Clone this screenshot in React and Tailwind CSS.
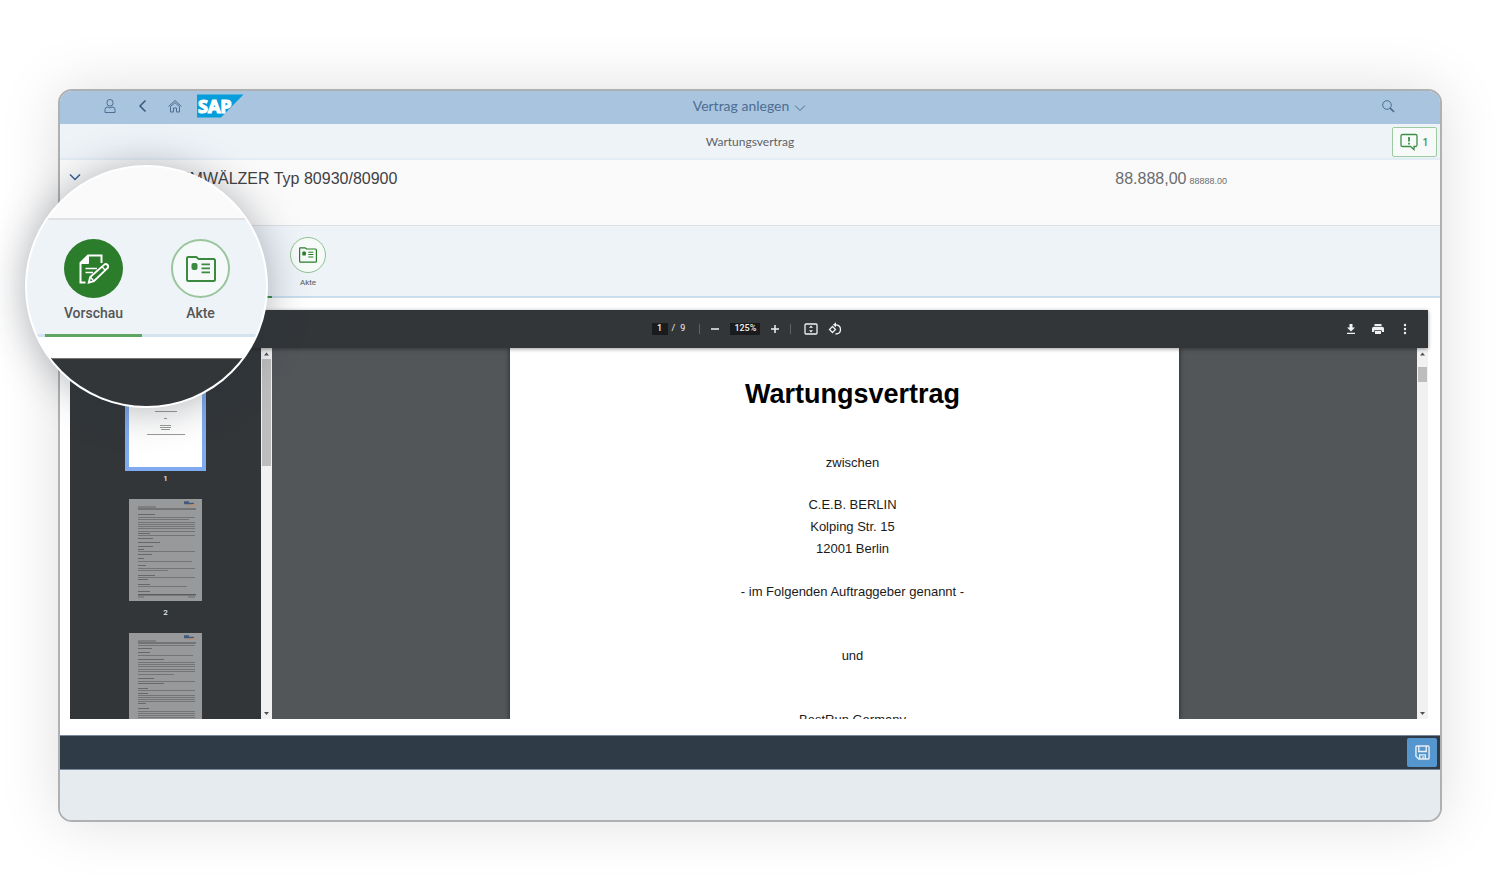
import { useState } from "react";

// geometry of the grey text blocks on the page thumbnails: [x, y, width]
const THUMB_LINES = {
  2: [
    [9, 15, 17], [9, 18, 57], [9, 20, 51], [9, 23, 57], [9, 25, 57], [9, 27, 57],
    [9, 29, 57], [9, 32, 57], [9, 34, 12], [9, 36, 57], [9, 39, 15], [9, 43, 22],
    [9, 47, 15], [9, 50, 6], [9, 52, 57], [9, 55, 14], [9, 59, 6], [9, 62, 54],
    [9, 66, 8], [9, 69, 57], [9, 71, 30], [9, 76, 17], [9, 78, 57], [9, 80, 10],
    [9, 85, 12], [9, 87, 49], [9, 92, 12],
  ],
  3: [
    [9, 12, 57], [9, 15, 14], [9, 19, 12], [9, 22, 55], [9, 26, 26], [9, 29, 57],
    [9, 31, 57], [9, 33, 57], [9, 36, 57], [9, 38, 57], [9, 41, 36], [9, 45, 16],
    [9, 48, 57], [9, 50, 26], [9, 55, 10], [9, 57, 57], [9, 60, 10], [9, 62, 57],
    [9, 64, 57], [9, 66, 57], [9, 68, 57], [9, 70, 8], [9, 75, 11], [9, 78, 57],
    [9, 80, 57], [9, 82, 57], [9, 84, 57], [9, 90, 40],
  ],
};

const TITLE_LINES = [
  [33, 28, 8], [31, 34, 12], [32, 37, 10], [32, 40, 9], [26, 46, 22],
  [35, 53, 3], [31, 60, 11], [31, 62, 11], [32, 64, 9], [18, 69, 38],
];

function DocPencilIcon({ className }) {
  return (
    <svg viewBox="0 0 30 30" className={className} fill="none" stroke="currentColor" strokeWidth="2">
      <path d="M22.5 9V1.5H9L1.5 9v19.5h5" />
      <path d="M1.5 9.5 9.5 1.5v8z" fill="currentColor" strokeWidth="1" />
      <path d="M6.5 14.5h11.500M6.500 18.500h7.500" strokeWidth="1.600" />
      <path d="M9.800 28.600l1.400-5.600L25.600 10.400q1.500-1 2.900.6t.2 2.900L14.900 27.200z" strokeWidth="1.900" />
      <path d="M23 12.800l3.400 3.700M11.500 23.200l3.300 3.800" strokeWidth="1.400" />
    </svg>
  );
}

function FolderCardIcon({ className }) {
  return (
    <svg viewBox="0 0 30 26" className={className} fill="none" stroke="currentColor" strokeWidth="2">
      <path d="M1 2.200q0-1.200 1.200-1.200h8l2.500 2h14.800q1.500 0 1.500 1.500v19q0 1.500-1.500 1.500h-25q-1.500 0-1.500-1.500z" />
      <rect x="5.500" y="7" width="6" height="7" rx="2" fill="currentColor" stroke="none" />
      <path d="M15.500 8.300h8.500M15.500 12.300h8.500M15.500 16.300h8.500" strokeWidth="1.800" />
    </svg>
  );
}

function SapLogo() {
  return (
    <svg viewBox="0 0 47 24" className="h-6 w-[47px]" aria-label="SAP">
      <path d="M0 .5h46.500L24 23.500H0z" fill="#069ddb" />
      <text
        x="1"
        y="19"
        fill="#fff"
        stroke="#fff"
        strokeWidth="1.200"
        fontFamily="'Open Sans', 'Noto Sans', sans-serif"
        fontWeight="700"
        fontSize="18"
      >
        SAP
      </text>
    </svg>
  );
}

function ShellBar() {
  return (
    <header className="grid h-[33px] grid-cols-[1fr_auto_1fr] items-center bg-[#a9c4df] pb-[3px] text-[#4d6d92]">
      <div className="flex items-center pl-[42px]">
        <button aria-label="Benutzer" className="w-4">
          <svg viewBox="0 0 16 16" className="size-4" fill="none" stroke="currentColor">
            <rect x="5" y="1.500" width="6" height="6.500" rx="2.800" />
            <path d="M3 14.500v-3q0-2.500 3-2.500l2 1 2-1q3 0 3 2.500v3z" />
          </svg>
        </button>
        <button aria-label="Zurück" className="ml-4 w-4">
          <svg viewBox="0 0 16 16" className="size-4" fill="none" stroke="#37567c" strokeWidth="1.500">
            <path d="M11.500 2.500 6 8l5.500 5.500" />
          </svg>
        </button>
        <button aria-label="Startseite" className="ml-[17px] w-4">
          <svg viewBox="0 0 16 16" className="size-4" fill="none" stroke="currentColor" strokeWidth="1">
            <path d="M1.500 8.500 8 2.500l6.500 6M3.500 8.500v5.500h3v-4h3v4h3V8.500L8 4.700z" />
          </svg>
        </button>
        <div className="ml-[14px]">
          <SapLogo />
        </div>
      </div>
      <button className="flex items-center gap-1 font-['Lato',sans-serif] text-[14px] leading-5">
        Vertrag anlegen
        <svg viewBox="0 0 14 14" className="mt-1 size-[14px]" fill="none" stroke="currentColor">
          <path d="M2 4.500l5 5 5-5" />
        </svg>
      </button>
      <div className="flex justify-end pr-[45px]">
        <button aria-label="Suchen">
          <svg viewBox="0 0 14 14" className="size-[14px]" fill="none" stroke="currentColor">
            <circle cx="6" cy="6" r="4.300" />
            <path d="M9.200 9.200l3.800 3.800" strokeWidth="1.700" />
          </svg>
        </button>
      </div>
    </header>
  );
}

function SubHeader() {
  return (
    <div className="grid h-9 grid-cols-[1fr_auto_1fr] items-center border-b-2 border-[#e3edf5] bg-[#eef3f8] pt-px">
      <span />
      <h2 className="font-['Lato',sans-serif] text-[12px] leading-4 text-[#5f6265]">Wartungsvertrag</h2>
      <div className="flex justify-end pr-[3px]">
        <button className="flex h-[30px] w-[45px] items-center justify-center gap-1 rounded-[2px] border border-[#9ccb9f] bg-[#f7faf9] text-[#3c9044]">
          <svg viewBox="0 0 18 18" className="size-[18px]" fill="none" stroke="currentColor" strokeWidth="1.300">
            <path d="M2.500 1.500h13q1.500 0 1.500 1.500v9q0 1.500-1.500 1.500h-1.500v3l-3.500-3h-8q-1.500 0-1.500-1.500V3q0-1.500 1.500-1.500z" />
            <path d="M9 4v4.500M9 9.700v1.800" strokeWidth="1.800" />
          </svg>
          <span className="font-['Noto_Sans',sans-serif] text-[11px] font-medium leading-4">1</span>
        </button>
      </div>
    </div>
  );
}

function ObjectHeader() {
  return (
    <div className="flex h-[66px] items-start border-b border-[#dcdfe2] bg-[#fafafa] pt-2 font-['Liberation_Sans',sans-serif]">
      <button aria-label="Kopfbereich" className="ml-2 mt-[2px] text-[#375f93]">
        <svg viewBox="0 0 14 14" className="size-[14px]" fill="none" stroke="currentColor" strokeWidth="1.500">
          <path d="M2 4.500l5 5 5-5" />
        </svg>
      </button>
      <h1 className="ml-24 text-[16px] leading-[22px] text-[#3f4143]">UMWÄLZER Typ 80930/80900</h1>
      <p className="ml-auto flex items-baseline gap-[3px] pr-[213px] text-[16px] leading-[22px] text-[#6a6d70]">
        88.888,00 <span className="text-[9px]">88888.00</span>
      </p>
    </div>
  );
}

function TabBar() {
  return (
    <nav className="flex h-[72px] gap-[6px] border-b-2 border-[#c8deef] bg-[#eef3f8] pl-[152px]">
      <button aria-label="Vorschau" className="-mb-[2px] w-[60px] border-b-2 border-[#3c9044]" />
      <button className="flex w-[60px] flex-col items-center pt-[11px]">
        <span className="flex size-9 items-center justify-center rounded-full border border-[#8fc093] bg-[#f6faf9] text-[#2b7d2b]">
          <FolderCardIcon className="h-4 w-[18px]" />
        </span>
        <span className="mt-1 font-['Roboto',sans-serif] text-[8px] leading-3 text-[#555]">Akte</span>
      </button>
    </nav>
  );
}

function Toolbar() {
  const [page, setPage] = useState("1");
  const [zoom, setZoom] = useState("125%");

  return (
    <div className="relative z-10 grid h-[38px] grid-cols-[1fr_auto_1fr] items-center bg-[#323639] font-['Roboto',sans-serif] text-[9px] text-[#f1f1f1] shadow-[0_1px_4px_rgba(0,0,0,0.4)]">
      <span />
      <div className="flex items-center pr-1">
        <input
          aria-label="Seite"
          value={page}
          onChange={(e) => setPage(e.target.value)}
          className="h-3 w-4 bg-[#191b1c] text-center font-medium"
        />
        <span className="ml-1">/</span>
        <span className="ml-[5px]">9</span>
        <span className="ml-[14px] h-[10px] w-px bg-[#5f6367]" />
        <button aria-label="Verkleinern" className="ml-[10px]">
          <svg viewBox="0 0 10 10" className="size-[10px]" stroke="currentColor" strokeWidth="1.500">
            <path d="M1 5h8" />
          </svg>
        </button>
        <input
          aria-label="Zoomstufe"
          value={zoom}
          onChange={(e) => setZoom(e.target.value)}
          className="ml-[10px] h-3 w-[30px] bg-[#191b1c] text-center font-medium"
        />
        <button aria-label="Vergrößern" className="ml-[10px]">
          <svg viewBox="0 0 10 10" className="size-[10px]" stroke="currentColor" strokeWidth="1.500">
            <path d="M1 5h8M5 1v8" />
          </svg>
        </button>
        <span className="ml-[10px] h-[10px] w-px bg-[#5f6367]" />
        <button aria-label="An Seite anpassen" className="ml-[13px]">
          <svg viewBox="0 0 14 12" className="h-3 w-[14px]" fill="none" stroke="currentColor" strokeWidth="1.300">
            <rect x="1" y="1" width="12" height="10" rx="1" />
            <path d="M7 2.500l2 2.300H5zM7 9.500l2-2.300H5z" fill="currentColor" stroke="none" />
          </svg>
        </button>
        <button aria-label="Drehen" className="ml-[10px]">
          <svg viewBox="0 0 14 14" className="size-[14px]" fill="none" stroke="currentColor" strokeWidth="1.300">
            <path d="M4.500 4.500 7.500 7.500l-3 3-3-3z" />
            <path d="M6.500 3q6-.5 6 4.500 0 4.500-5 4.500" />
            <path d="M8 .3v5L5 2.800z" fill="currentColor" stroke="none" />
          </svg>
        </button>
      </div>
      <div className="flex items-center justify-end gap-[14px] pr-[17px]">
        <button aria-label="Herunterladen">
          <svg viewBox="0 0 12 12" className="size-3" fill="currentColor">
            <path d="M4.500 1h3v3.500H10L6 8.500 2 4.500h2.500zM2 9.700h8V11H2z" />
          </svg>
        </button>
        <button aria-label="Drucken">
          <svg viewBox="0 0 14 12" className="h-3 w-[14px]" fill="currentColor">
            <path d="M3.500 1h7v2h-7zM3 3.700h8q2 0 2 2V9h-2.200V7.300H3.200V9H1V5.700q0-2 2-2z" />
            <path d="M4 8h6v3H4z" />
          </svg>
        </button>
        <button aria-label="Weitere Aktionen">
          <svg viewBox="0 0 12 12" className="size-3" fill="currentColor">
            <circle cx="6" cy="2" r="1.200" />
            <circle cx="6" cy="6" r="1.200" />
            <circle cx="6" cy="10" r="1.200" />
          </svg>
        </button>
      </div>
    </div>
  );
}

function Scrollbar({ children }) {
  return (
    <div className="flex w-[11px] shrink-0 flex-col items-center bg-[#f1f1f1]">
      <svg viewBox="0 0 11 11" className="size-[11px]">
        <path d="M3 7.500l2.500-3 2.500 3z" fill="#505050" />
      </svg>
      {children}
      <svg viewBox="0 0 11 11" className="mt-auto size-[11px]">
        <path d="M3 4l2.500 3L8 4z" fill="#505050" />
      </svg>
    </div>
  );
}

function CoverThumbnail() {
  return (
    <button className="flex flex-col items-center">
      <svg viewBox="0 0 73 102" className="h-[102px] w-[73px] bg-white ring-4 ring-[#80aaf0]">
        <rect x="25" y="19" width="24" height="2.500" fill="#333" />
        {TITLE_LINES.map(([x, y, w], i) => (
          <rect key={i} x={x} y={y} width={w} height="1" fill="#9a9a9a" />
        ))}
      </svg>
      <span className="mb-2 h-6 font-medium">1</span>
    </button>
  );
}

function Thumbnail({ number, label }) {
  return (
    <button aria-label={`Seite ${number}`} className="flex flex-col items-center">
      <svg viewBox="0 0 73 102" className="h-[102px] w-[73px] bg-[#98999b]">
        <path d="M55 3h5M55 4.500h10" stroke="#44597b" strokeWidth="1.500" />
        <path d="M58 7.500q5-2.500 8-2" stroke="#c08a5c" strokeWidth="1" fill="none" />
        <rect x="9" y="7.500" width="18" height="1" fill="#65676a" />
        <rect x="9" y="9.500" width="58" height="1" fill="#4e5052" />
        {THUMB_LINES[number].map(([x, y, w], i) => (
          <rect key={i} x={x} y={y} width={w} height="1" fill={w < 30 ? "#66686a" : "#727476"} />
        ))}
        <rect x="9" y="95" width="58" height="1.500" fill="#5a5c5e" />
        <path d="M9 98h6M59 98h7" stroke="#6a6c6e" strokeWidth="1" />
      </svg>
      <span className="mb-2 h-6 font-medium">{label}</span>
    </button>
  );
}

function DocumentPage() {
  return (
    <article className="w-[669px] bg-white pl-4 text-center font-['Liberation_Sans',sans-serif] text-[13px] leading-[21px] text-[#1a1a1a] shadow-[0_0_5px_rgba(0,0,0,0.6)]">
      <h2 className="pt-7 text-[27px] font-bold leading-9 text-black">Wartungsvertrag</h2>
      <p className="pt-10">zwischen</p>
      <address className="pt-[21px] not-italic leading-[22px]">
        C.E.B. BERLIN
        <br />
        Kolping Str. 15
        <br />
        12001 Berlin
      </address>
      <p className="pt-[21px]">- im Folgenden Auftraggeber genannt -</p>
      <p className="pt-[43px]">und</p>
      <p className="pt-[43px]">BestRun Germany</p>
    </article>
  );
}

function PdfViewer() {
  return (
    <section className="mb-4 ml-[10px] mr-3 mt-3 bg-[#525659]">
      <Toolbar />
      <div className="flex h-[371px] overflow-hidden">
        <aside className="flex w-[191px] shrink-0 flex-col items-center bg-[#323639] pt-[17px] font-['Roboto',sans-serif] text-[8px] leading-6 text-[#e8eaed]">
          <CoverThumbnail />
          <Thumbnail number={2} label="2" />
          <Thumbnail number={3} />
        </aside>
        <Scrollbar>
          <div className="h-[107px] w-[9px] bg-[#bdbdbd]" />
        </Scrollbar>
        <div className="flex min-w-0 flex-1 justify-center">
          <DocumentPage />
        </div>
        <Scrollbar>
          <div className="mt-2 h-[15px] w-[9px] bg-[#bdbdbd]" />
        </Scrollbar>
      </div>
    </section>
  );
}

function FooterBar() {
  return (
    <footer className="flex h-[35px] items-center justify-end border-y border-[#78879a] bg-[#2f3c48] pr-[3px]">
      <button
        aria-label="Sichern"
        className="flex h-[29px] w-[30px] items-center justify-center rounded-[2px] bg-[#5496cd] text-[#e8eff5]"
      >
        <svg viewBox="0 0 16 16" className="size-[15px]" fill="none" stroke="currentColor" strokeWidth="1.500">
          <path d="M2 1h12q1 0 1 1v12q0 1-1 1H4l-3-3V2q0-1 1-1z" />
          <path d="M4 1v6h8V1M5 15v-4.500h6V15M8.500 12v3" />
        </svg>
      </button>
    </footer>
  );
}

// magnifier that enlarges the tab bar
function Lens() {
  return (
    <div className="absolute -left-[33px] top-[76px] z-20 flex size-[243px] flex-col overflow-hidden rounded-full border-2 border-white bg-white shadow-[0_2px_40px_rgba(40,48,62,0.36)]">
      <div className="h-[53px] border-b-2 border-[#dfe2e5] bg-[#fafafa]" />
      <div className="flex h-[117px] gap-[10px] border-b-[3px] border-[#d3e3f0] bg-[#eef3f8] pl-[18px] font-['Roboto',sans-serif] text-[14px] font-medium leading-5 text-[#555]">
        <button className="-mb-[3px] flex w-[97px] flex-col items-center border-b-[3px] border-[#5ea562] pt-[19px]">
          <span className="flex size-[59px] items-center justify-center rounded-full bg-[#2b7d2b] text-white">
            <DocPencilIcon className="size-[30px]" />
          </span>
          <span className="mt-[5px]">Vorschau</span>
        </button>
        <button className="flex w-[97px] flex-col items-center pt-[19px]">
          <span className="flex size-[59px] items-center justify-center rounded-full border-2 border-[#9ac59d] bg-[#f5f9f9] text-[#3c8a40]">
            <FolderCardIcon className="h-[26px] w-[30px]" />
          </span>
          <span className="mt-[5px]">Akte</span>
        </button>
      </div>
      <div className="h-[21px] bg-white" />
      <div className="flex-1 border-t border-[#777] bg-[#323639]" />
    </div>
  );
}

export default function App() {
  return (
    <main className="min-h-screen bg-white px-[58px] pb-[70px] pt-[89px]">
      <div className="relative">
        <div className="overflow-hidden rounded-[14px] border-2 border-[#afb0b1] bg-white shadow-[0_0_60px_rgba(0,0,0,0.13)]">
          <ShellBar />
          <SubHeader />
          <ObjectHeader />
          <TabBar />
          <PdfViewer />
          <FooterBar />
          <div className="h-[50px] bg-[#e6ebf0]" />
        </div>
        <Lens />
      </div>
    </main>
  );
}
